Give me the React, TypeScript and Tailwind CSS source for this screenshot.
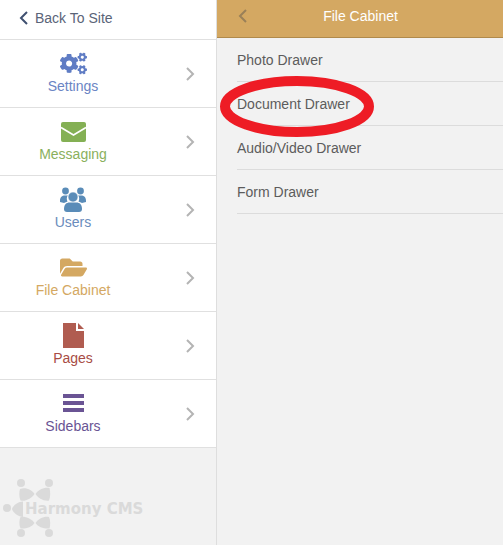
import { FaCogs, FaFolderOpen } from "react-icons/fa";

function Chevron({ dir, className }: { dir: "left" | "right"; className?: string }) {
  return (
    <svg width="9" height="14" viewBox="0 0 9 14" fill="none" stroke="currentColor" strokeWidth="2" className={className}>
      <polyline points={dir === "left" ? "8,1 2,7 8,13" : "1,1 7,7 1,13"} />
    </svg>
  );
}

function EnvelopeIcon() {
  return (
    <svg width="25" height="20" viewBox="0 0 25 20" className="mt-[2px]">
      <rect width="25" height="20" rx="2" fill="#84b054" />
      <polyline points="0,5.5 12.5,13 25,5.5" fill="none" stroke="#fff" strokeWidth="1.6" />
    </svg>
  );
}

function UsersIcon() {
  return (
    <svg width="26" height="25" viewBox="0 0 26 25" fill="#5a8cb8">
      <circle cx="5.5" cy="4" r="3.4" />
      <circle cx="20.5" cy="4" r="3.4" />
      <path d="M0 14 C0 10 2 8.5 5 8.5 L8 8.5 C6.5 10 6.5 12.5 7.5 14.5 L4 16 L0 15Z" />
      <path d="M26 14 C26 10 24 8.5 21 8.5 L18 8.5 C19.5 10 19.5 12.5 18.5 14.5 L22 16 L26 15Z" />
      <circle cx="13" cy="10" r="5" stroke="#fff" strokeWidth="0.6" />
      <path d="M4 22 C4 17.5 6.5 15.5 9.5 15.5 L16.5 15.5 C19.5 15.5 22 17.5 22 22 C22 24 21 25 19 25 L7 25 C5 25 4 24 4 22Z" />
    </svg>
  );
}

function PageIcon() {
  return (
    <svg width="21" height="25" viewBox="0 0 21 25" fill="#b05c50">
      <path d="M0 0 L13 0 L13 8 L21 8 L21 25 L0 25Z" />
      <path d="M15 0 L21 6 L15 6Z" />
    </svg>
  );
}

function BarsIcon() {
  return (
    <div className="flex w-[21px] flex-col gap-[3px]">
      <div className="h-[4px] bg-[#6a5494]" />
      <div className="h-[4px] bg-[#6a5494]" />
      <div className="h-[4px] bg-[#6a5494]" />
    </div>
  );
}

const menu = [
  { label: "Settings", icon: <FaCogs size={27} className="text-[#5f7cc4]" />, color: "text-[#6a84c4]" },
  { label: "Messaging", icon: <EnvelopeIcon />, color: "text-[#8ab05c]" },
  { label: "Users", icon: <UsersIcon />, color: "text-[#6a8cbc]" },
  { label: "File Cabinet", icon: <FaFolderOpen size={27} className="text-[#d4a862]" />, color: "text-[#d4a862]" },
  { label: "Pages", icon: <PageIcon />, color: "text-[#a84c44]" },
  { label: "Sidebars", icon: <BarsIcon />, color: "text-[#6a5494]" },
];

const drawers = ["Photo Drawer", "Document Drawer", "Audio/Video Drawer", "Form Drawer"];

function Logo() {
  return (
    <div className="relative mt-[31px] ml-[3px] h-[60px] w-[142px]">
      <svg width="50" height="60" viewBox="0 0 50 60" fill="#dadada">
        <circle cx="18" cy="4" r="4" />
        <circle cx="46" cy="4" r="4" />
        <path d="M17 10 C23 8 29 11 31.5 15 C29 19 22 23 17.5 21.5 C16 18 16 13 17 10Z" />
        <path d="M46.5 9 C41 8 35 11 32.5 15 C35 19 41 22.5 46 21.5 C47.5 18 47.5 13 46.5 9Z" />
        <circle cx="4" cy="29" r="4" />
        <path d="M9 30 C10 26 16 22.5 20 22.5 L20 38 C16 38 10 34 9 30Z" />
        <path d="M17.5 38 C22 37 29 40 31.5 44 C29 48 23 50 17.5 49.5 C16 46 16 41 17.5 38Z" />
        <path d="M46 38 C41 37 35 40 32.5 44 C35 48 41 50 46.5 49.5 C47.5 46 47.5 41 46 38Z" />
        <circle cx="18" cy="54" r="4" />
        <circle cx="46" cy="54" r="4" />
      </svg>
      <span className="absolute left-[22px] top-[20px] font-['DejaVu_Sans',sans-serif] text-[15px] leading-[20px] font-bold text-[#dadada] whitespace-nowrap">
        Harmony CMS
      </span>
    </div>
  );
}

export default function App() {
  return (
    <div className="relative flex h-[545px] w-[503px] overflow-hidden bg-[#f2f2f2] font-['Liberation_Sans',sans-serif] text-sm">
      {/* Left menu */}
      <div className="flex w-[217px] shrink-0 flex-col border-r border-[#dedede]">
        <div className="flex h-[40px] items-center border-b border-[#e0e0e0] bg-white pb-[3px] pl-[19px] text-[#5a6478]">
          <Chevron dir="left" className="text-[#3f5070]" />
          <span className="ml-[7px]">Back To Site</span>
        </div>
        {menu.map((item) => (
          <div key={item.label} className="relative flex h-[68px] flex-col items-center border-b border-[#e0e0e0] bg-white pt-[10px] pr-[70px]">
            <div className="flex h-[26px] items-center">{item.icon}</div>
            <span className={item.color}>{item.label}</span>
            <Chevron dir="right" className="absolute right-[21px] top-[27px] text-[#b4b4b4]" />
          </div>
        ))}
        <Logo />
      </div>

      {/* Right panel */}
      <div className="flex-1">
        <div className="relative flex h-[38px] items-center justify-center border-b border-[#b08a4c] bg-[#d4a862] pb-[6px] text-white">
          <Chevron dir="left" className="absolute left-[21px] top-[9px] text-[#9a8058]" />
          <span className="ml-[1px]">File Cabinet</span>
        </div>
        <div className="pl-[20px]">
          {drawers.map((d) => (
            <div key={d} className="flex h-[44px] items-center border-b border-[#dcdcdc] text-[#5c5c5c]">
              {d}
            </div>
          ))}
        </div>
      </div>

      {/* Red annotation circled on the screenshot */}
      <svg width="160" height="64" viewBox="0 0 160 64" className="pointer-events-none absolute left-[218px] top-[75px]" fill="none">
        <ellipse cx="79" cy="31.5" rx="72" ry="25.5" stroke="#ee1c25" strokeWidth="10" />
      </svg>
    </div>
  );
}
